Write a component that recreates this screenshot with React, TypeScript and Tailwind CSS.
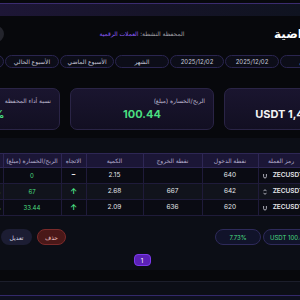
import React from 'react';

const ranges = ['تطبيق', '2025/12/02', '2025/12/02', 'الشهر', 'الأسبوع الماضي', 'الأسبوع الحالي', 'اليوم'];

const trades = [
  { symbol: 'ZECUSDT', icon: 'dot', entry: '640', exit: '', qty: '2.15', dir: 'flat', pnl: '0', pct: '0%' },
  { symbol: 'ZECUSDT', icon: 'swap', entry: '642', exit: '667', qty: '2.68', dir: 'up', pnl: '67', pct: '3.89%' },
  { symbol: 'ZECUSDT', icon: 'dot', entry: '620', exit: '636', qty: '2.09', dir: 'up', pnl: '33.44', pct: '2.58%' },
];

function SymbolIcon({ kind }: { kind: string }) {
  if (kind === 'swap') {
    return (
      <svg width="4" height="6" viewBox="0 0 4 6" fill="none" stroke="#d4d4e0" strokeWidth="0.8">
        <path d="M0.5 2.2 L2 0.6 L3.5 2.2 M0.5 3.8 L2 5.4 L3.5 3.8" />
      </svg>
    );
  }
  return (
    <svg width="4" height="6" viewBox="0 0 4 6" fill="none" stroke="#d4d4e0" strokeWidth="0.8">
      <path d="M0.6 1 L0.6 3.6 A1.4 1.4 0 0 0 3.4 3.6 L3.4 1" />
    </svg>
  );
}

export default function App() {
  return (
    <div className="h-screen w-screen overflow-hidden bg-[#07080c] font-['Inter','DejaVu_Sans',sans-serif]">
      <div className="pt-[3px]">
        <div className="h-[13px] border-t border-[#3b2c70] bg-gradient-to-r from-[#1d1636] via-[#161429] to-[#0f1320]" />
      </div>

      <div dir="rtl" className="w-[452px] -ml-[84px]">
        {/* header */}
        <div className="mt-[10px] grid grid-cols-3 items-center h-[16px]">
          <h1 className="justify-self-start -mr-[23px] text-[12px] leading-[16px] font-bold text-white whitespace-nowrap">المحفظة الافتراضية</h1>
          <div className="justify-self-center text-[6px] leading-[10px] text-[#a1a1aa] whitespace-nowrap">
            المحفظة النشطة: <span className="text-[#8b5cf6]">العملات الرقمية</span>
          </div>
          <div className="justify-self-end ml-[48px] w-[40px] h-[16px] rounded-full bg-[#23242c]" />
        </div>

        {/* ranges */}
        <div className="mt-[13px] flex justify-center gap-px">
          {ranges.map((r, i) => (
            <div
              key={i}
              className="w-[54px] h-[13px] rounded-full border border-[#2a2550] bg-[#0c0d18] flex items-center justify-center text-[6px] text-[#c8c8d8] whitespace-nowrap"
            >
              {r}
            </div>
          ))}
        </div>

        {/* cards */}
        <div className="mt-[20px] grid grid-cols-3 gap-[10px]">
          <div className="h-[42px] rounded-[7px] border border-[#2a2446] bg-gradient-to-b from-[#1a152f] to-[#120f22] px-[8px] pt-[8px]">
            <div className="text-[6px] leading-[8px] text-[#bdb8cf] text-right whitespace-nowrap">إجمالي الرصيد</div>
            <div dir="ltr" className="mt-[2px] text-center text-[11px] leading-[14px] font-bold text-[#f4f4f5]">USDT 1,400.44</div>
          </div>
          <div className="h-[42px] rounded-[7px] border border-[#2a2446] bg-gradient-to-b from-[#1a152f] to-[#120f22] px-[8px] pt-[8px]">
            <div className="text-[6px] leading-[8px] text-[#bdb8cf] text-right whitespace-nowrap">الربح/الخسارة (مبلغ)</div>
            <div dir="ltr" className="mt-[2px] text-center text-[11px] leading-[14px] font-bold text-[#4ade80]">100.44</div>
          </div>
          <div className="h-[42px] rounded-[7px] border border-[#2a2446] bg-gradient-to-b from-[#1a152f] to-[#120f22] px-[8px] pt-[8px]">
            <div className="text-[6px] leading-[8px] text-[#bdb8cf] text-right whitespace-nowrap">نسبة أداء المحفظة</div>
            <div dir="ltr" className="mt-[2px] text-center text-[11px] leading-[14px] font-bold text-[#4ade80]">7.73%</div>
          </div>
        </div>

        {/* trades panel */}
        <div className="mt-[8px] h-[132px] bg-[#0c0e16] pt-[15px]">
          <table className="mx-auto w-[324px] table-fixed border-collapse text-center">
            <colgroup>
              <col className="w-[46px]" />
              <col className="w-[56px]" />
              <col className="w-[59px]" />
              <col className="w-[57px]" />
              <col className="w-[25px]" />
              <col className="w-[58px]" />
              <col className="w-[23px]" />
            </colgroup>
            <thead>
              <tr className="h-[14px] bg-[#1b1636] text-[6px] text-[#b5aecd]">
                <th className="font-normal border border-[#2e2755] whitespace-nowrap">رمز العملة</th>
                <th className="font-normal border border-[#2e2755] whitespace-nowrap">نقطة الدخول</th>
                <th className="font-normal border border-[#2e2755] whitespace-nowrap">نقطة الخروج</th>
                <th className="font-normal border border-[#2e2755] whitespace-nowrap">الكمية</th>
                <th className="font-normal border border-[#2e2755] whitespace-nowrap">الاتجاه</th>
                <th className="font-normal border border-[#2e2755] whitespace-nowrap">الربح/الخسارة (مبلغ)</th>
                <th className="font-normal border border-[#2e2755] whitespace-nowrap overflow-hidden">%</th>
              </tr>
            </thead>
            <tbody>
              {trades.map((t, i) => (
                <tr key={i} className={`h-[16px] text-[6.5px] text-[#e5e7eb] ${i === 1 ? 'bg-[#11131c]' : 'bg-[#0a0b13]'}`}>
                  <td className="border border-[#1f1b3a] whitespace-nowrap">
                    <div className="flex items-center justify-center gap-[6px] pl-[4px] font-semibold">
                      <span>{t.symbol}</span>
                      <SymbolIcon kind={t.icon} />
                    </div>
                  </td>
                  <td className="border border-[#1f1b3a]">{t.entry}</td>
                  <td className="border border-[#1f1b3a]">{t.exit}</td>
                  <td className="border border-[#1f1b3a]">{t.qty}</td>
                  <td className="border border-[#1f1b3a]">
                    {t.dir === 'up' ? (
                      <span className="text-[8px] font-bold text-[#4ade80]">↑</span>
                    ) : (
                      <span className="text-[7px] font-bold text-white">–</span>
                    )}
                  </td>
                  <td className="border border-[#1f1b3a] text-[6px] text-[#4ade80]">{t.pnl}</td>
                  <td className="border border-[#1f1b3a] text-[6px] text-[#4ade80] overflow-hidden">{t.pct}</td>
                </tr>
              ))}
            </tbody>
          </table>

          {/* summary + actions */}
          <div className="mt-[13px] h-[16px] flex justify-between pr-[54px] pl-[85px]">
            <div className="flex gap-[2px]">
              <div dir="ltr" className="w-[51px] h-[16px] rounded-full border border-[#2e2a5a] bg-[#11132a] flex items-center pl-[6px] text-[6px] text-[#4ade80] whitespace-nowrap overflow-hidden">
                USDT 100.44
              </div>
              <div dir="ltr" className="w-[46px] h-[16px] rounded-full border border-[#2e2a5a] bg-[#11132a] flex items-center justify-center text-[6px] text-[#4ade80]">
                7.73%
              </div>
            </div>
            <div className="flex gap-[5px]">
              <button className="w-[29px] h-[16px] rounded-full border border-[#7a2a2a] bg-[#4a1818] text-[6px] text-[#f3c6c6]">حذف</button>
              <button className="w-[31px] h-[16px] rounded-full bg-[#1c1d33] text-[6px] text-[#d6d6e4]">تعديل</button>
            </div>
          </div>

          {/* pagination */}
          <div className="mt-[9px] flex justify-center">
            <button className="w-[17px] h-[12px] rounded-[4px] border border-[#7c3aed] bg-[#5b21b6] text-[6px] text-white flex items-center justify-center">1</button>
          </div>
        </div>

        <div className="mt-[11px] h-[14px] border-t border-[#1c1e2b] bg-[#0c0e16]" />
        <div className="h-[20px] border-t border-[#33296b] bg-[#0e1020]" />
      </div>
    </div>
  );
}
